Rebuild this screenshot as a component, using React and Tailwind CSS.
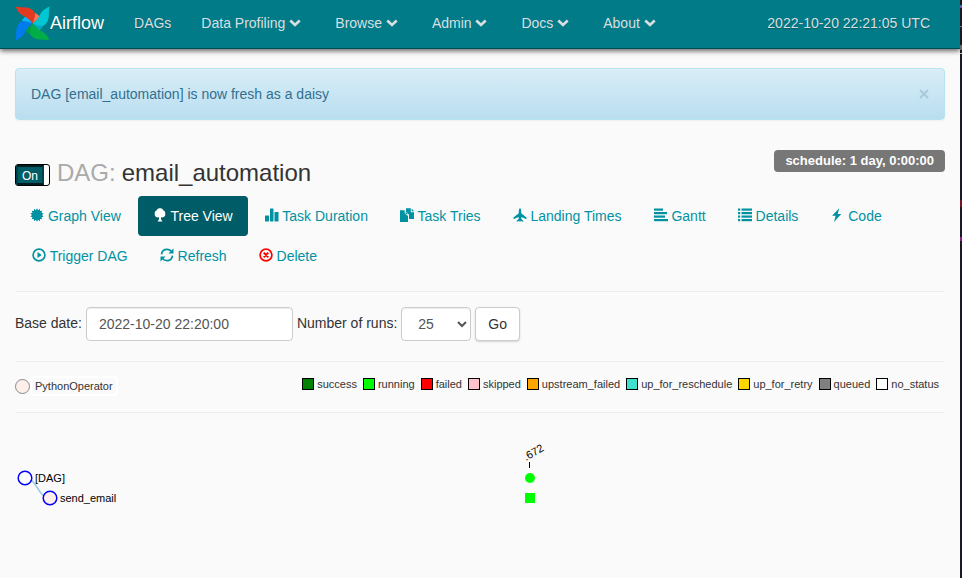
import React from "react";

const NAV_MENUS = ["Data Profiling", "Browse", "Admin", "Docs", "About"];

const STATES = [
  ["success", "bg-[#008000]"],
  ["running", "bg-[#00ff00]"],
  ["failed", "bg-[#ff0000]"],
  ["skipped", "bg-[#ffc0cb]"],
  ["upstream_failed", "bg-[#ffa500]"],
  ["up_for_reschedule", "bg-[#40e0d0]"],
  ["up_for_retry", "bg-[#ffd700]"],
  ["queued", "bg-[#808080]"],
  ["no_status", "bg-white"],
];

const burst = Array.from({ length: 28 }, (_, i) => {
  const r = i % 2 ? 5 : 6.8;
  const a = (i * Math.PI) / 14;
  return `${(7 + r * Math.sin(a)).toFixed(2)},${(7 - r * Math.cos(a)).toFixed(2)}`;
}).join(" ");

const GLYPHS = {
  graph: <polygon points={burst} />,
  tree: (
    <path d="M7 .3C8.500 0 9.800 1 10.200 2.200C11.700 2.800 12.600 4.200 12.200 5.800C12.800 8 11 9.700 9 9.400C8.600 9.400 8.300 9.200 8 9V11.300L9.500 13.600H4.500L6 11.300V9C5.700 9.200 5.400 9.400 5 9.400C3 9.700 1.200 8 1.800 5.800C1.400 4.200 2.300 2.800 3.800 2.200C4.200 1 5.500 0 7 .3Z" />
  ),
  stats: (
    <>
      <rect x="0" y="7.500" width="4" height="6" rx=".4" />
      <rect x="5" y="0.500" width="3.500" height="13" rx=".4" />
      <rect x="9.500" y="4" width="4" height="9.500" rx=".4" />
    </>
  ),
  copy: (
    <>
      <path d="M0 2.300H4.700V5.200L7 7.600H8V14H0Z" />
      <path d="M6 .3H10.800V4.300H14V11H9V6.700L6 3.600Z" />
      <path d="M11.700 .6L14 3.300H11.700ZM5.600 3.400L8 6.300H5.600Z" />
    </>
  ),
  plane: (
    <path d="M7 0C7.900 .8 8.200 2 8.200 3.200V5.200L13.500 9.500V11.200L8.400 8.900L8.300 11.100L10.300 12.700V13.800L7.700 13L7 14L6.300 13L3.700 13.800V12.700L5.700 11.100L5.600 8.900L.5 11.200V9.500L5.800 5.200V3.200C5.800 2 6.100 .8 7 0Z" />
  ),
  gantt: (
    <>
      <rect x="0" y="0.500" width="9" height="2.200" />
      <rect x="0" y="4" width="13" height="2.200" />
      <rect x="0" y="7.500" width="11" height="2.200" />
      <rect x="0" y="11" width="14" height="2.200" />
    </>
  ),
  list: (
    <>
      {[0.5, 4, 7.5, 11].map((y) => (
        <g key={y}>
          <rect x="0" y={y} width="2.200" height="2.200" />
          <rect x="3.500" y={y} width="10.500" height="2.200" />
        </g>
      ))}
    </>
  ),
  flash: <path d="M9.200 .2L2 7.800H5.600L4 13.900L11.300 6H7.700Z" />,
  play: (
    <>
      <circle cx="7" cy="7" r="5.900" fill="none" stroke="currentColor" strokeWidth="1.700" />
      <path d="M5.500 3.900L9.700 7L5.500 10.100Z" />
    </>
  ),
  refresh: (
    <>
      <path d="M1.500 6.400C1.900 3.300 4.200 1.400 7 1.400C8.700 1.400 10.200 2 11.300 3.200M12.500 7.600C12.100 10.700 9.800 12.600 7 12.600C5.300 12.600 3.800 12 2.700 10.800" fill="none" stroke="currentColor" strokeWidth="1.700" />
      <path d="M13.500 .5V5.600H8.400ZM.5 13.500V8.400H5.600Z" />
    </>
  ),
  remove: (
    <>
      <circle cx="7" cy="7" r="5.900" fill="none" stroke="currentColor" strokeWidth="1.700" />
      <path d="M4.700 4.700L9.300 9.300M9.300 4.700L4.700 9.300" fill="none" stroke="currentColor" strokeWidth="1.900" />
    </>
  ),
};

const TABS = [
  ["Graph View", "graph"],
  ["Tree View", "tree"],
  ["Task Duration", "stats"],
  ["Task Tries", "copy"],
  ["Landing Times", "plane"],
  ["Gantt", "gantt"],
  ["Details", "list"],
  ["Code", "flash"],
  ["Trigger DAG", "play"],
  ["Refresh", "refresh"],
  ["Delete", "remove"],
];

function Glyph({ name }) {
  return (
    <svg
      viewBox="0 0 14 14"
      aria-hidden="true"
      className={`inline-block size-3.5 fill-current align-[-1px] ${name === "remove" ? "text-[#ff0000]" : ""}`}
    >
      {GLYPHS[name]}
    </svg>
  );
}

function Pinwheel() {
  const blades = [
    [0, "#e43921", "#ff7557"],
    [90, "#00c7d4", "#04a9b8"],
    [180, "#00ad46", "#079a4c"],
    [270, "#017cee", "#0cb6ff"],
  ];
  return (
    <svg viewBox="0 0 35 35" aria-hidden="true" className="mt-0.5 size-[35px] shrink-0">
      {blades.map(([angle, , fold]) => (
        <path
          key={angle}
          transform={`rotate(${angle} 17.5 17.5)`}
          fill={fold}
          d="M17.500 17.500L20 7C22.500 8 24.500 10 24.800 11.500C22 13.500 20 15.500 17.500 17.500Z"
        />
      ))}
      {blades.map(([angle, main]) => (
        <path
          key={angle}
          transform={`rotate(${angle} 17.5 17.5)`}
          fill={main}
          d="M.4 .4C4 1.200 8 1 11.500 1.400C16 2 18.700 4.500 20 7C20.300 10.500 19 14 17.500 17.500C15.500 13.500 11.500 11.500 7 9C4 7 2 4 .4 .4Z"
        />
      ))}
    </svg>
  );
}

function Chevron() {
  return (
    <svg viewBox="0 0 12 8" aria-hidden="true" className="inline-block h-2 w-3 align-[1px]">
      <path d="M1.300 1.500L6 6L10.700 1.500" fill="none" stroke="currentColor" strokeWidth="2.700" />
    </svg>
  );
}

function Navbar() {
  return (
    <nav className="flex h-[49px] items-center border-b border-[#004b54] bg-[#017b87] pb-[3px] pl-[15px] text-[#d9dfe0] shadow-[0_2px_5px_rgba(0,0,0,0.6)] [text-shadow:0_1px_1px_rgba(0,0,0,0.25)]">
      <a href="#" className="flex items-center pr-[15px] text-lg leading-5 text-white">
        <Pinwheel />
        Airflow
      </a>
      <a href="#" className="px-[15px]">DAGs</a>
      {NAV_MENUS.map((label) => (
        <button key={label} type="button" className="pl-[15px] pr-[19px] whitespace-nowrap">
          {label} <Chevron />
        </button>
      ))}
      <span className="ml-auto pr-[30px]">2022-10-20 22:21:05 UTC</span>
    </nav>
  );
}

function TreeChart() {
  return (
    <svg
      role="img"
      aria-label="Task tree"
      className="h-[145px] w-full font-['Liberation_Sans',Arial,sans-serif] text-[11px]"
    >
      <path d="M10 45C22.500 45 22.500 65 35 65" fill="none" stroke="#9ecae1" strokeWidth="1.500" />
      <circle cx="10" cy="45" r="6.800" fill="#fff" stroke="#0000ff" strokeWidth="1.500" />
      <circle cx="35" cy="65" r="6.800" fill="#ffefeb" stroke="#0000ff" strokeWidth="1.500" />
      <text x="20" y="49">[DAG]</text>
      <text x="45" y="69">send_email</text>
      <text transform="translate(511 28) rotate(-30)">.672</text>
      <path d="M514.500 29V35" stroke="#000" />
      <circle cx="515" cy="45" r="5" fill="#00ff00" />
      <rect x="510" y="60" width="10" height="10" fill="#00ff00" />
    </svg>
  );
}

export default function App() {
  return (
    <div className="flex min-h-screen bg-[#fafafa] font-['Liberation_Sans',Arial,sans-serif] text-sm leading-5 text-[#333]">
      <div className="min-w-0 flex-1">
        <Navbar />
        <main className="px-[15px] pt-[19px]">
          <div
            role="alert"
            className="flex items-center justify-between rounded border border-[#b5e4ee] bg-linear-to-b from-[#d9edf7] to-[#b9def0] p-[15px] text-[#31708f] shadow-[0_1px_2px_rgba(0,0,0,0.05),inset_0_1px_0_rgba(255,255,255,0.25)]"
          >
            <span>DAG [email_automation] is now fresh as a daisy</span>
            <button type="button" aria-label="Close" className="text-[#a9cadb]">
              <svg viewBox="0 0 10 10" aria-hidden="true" className="size-2.5">
                <path d="M1 1L9 9M9 1L1 9" stroke="currentColor" strokeWidth="2" />
              </svg>
            </button>
          </div>

          <div className="mt-[30px] flex items-start justify-between">
            <h3 className="flex items-center pt-[10px] text-2xl leading-[26px]">
              <button
                type="button"
                aria-pressed="true"
                className="mt-1 mr-[7px] flex h-[22px] w-[35px] overflow-hidden rounded-[3px] border border-black bg-white text-xs leading-5 text-white"
              >
                <span className="flex h-5 w-[28px] items-center justify-center border-2 border-t-[#001c20] border-r-[#004049] border-b-[#001c20] border-l-[#004049] bg-[#005d68] pt-0.5">
                  On
                </span>
              </button>
              <span className="text-[#aaa]">DAG:</span>
              <span className="pl-1.5">email_automation</span>
            </h3>
            <span className="rounded bg-[#777] px-[11px] py-px text-[13px] leading-5 font-bold text-white">
              schedule: 1 day, 0:00:00
            </span>
          </div>

          <ul className="mt-[10px] flex flex-wrap">
            {TABS.map(([label, icon], i) => (
              <li key={label} className={i ? "ml-[2px]" : ""}>
                <a
                  href="#"
                  className={`block rounded px-[15px] py-[10px] ${
                    label === "Tree View" ? "bg-[#005c66] text-white" : "text-[#0092a2]"
                  }`}
                >
                  <Glyph name={icon} /> {label}
                </a>
              </li>
            ))}
          </ul>

          <hr className="mt-[15px] border-[#eee]" />

          <form className="flex flex-wrap items-center gap-1 pt-[15px] pb-5" onSubmit={(e) => e.preventDefault()}>
            <label htmlFor="base-date" className="pb-0.5">Base date:</label>
            <input
              id="base-date"
              type="text"
              defaultValue="2022-10-20 22:20:00"
              className="h-[34px] w-[207px] rounded border border-[#ccc] bg-white px-3 text-[#555] shadow-[inset_0_1px_1px_rgba(0,0,0,0.075)]"
            />
            <label htmlFor="runs" className="pb-0.5">Number of runs:</label>
            <select
              id="runs"
              defaultValue="25"
              className="h-[34px] w-[70px] rounded border border-[#ccc] bg-white px-3 text-[#555] shadow-[inset_0_1px_1px_rgba(0,0,0,0.075)]"
            >
              <option>5</option>
              <option>25</option>
              <option>50</option>
            </select>
            <button
              type="submit"
              className="h-[34px] rounded border border-[#ccc] bg-white px-3 shadow-[0_1px_2px_rgba(0,0,0,0.15)]"
            >
              Go
            </button>
          </form>

          <hr className="border-[#eee]" />

          <div className="flex h-[50px] items-start justify-between pt-[14px] text-[11px] leading-[19px]">
            <div className="flex items-center">
              <svg viewBox="0 0 15 15" aria-hidden="true" className="size-[15px]">
                <circle cx="7.500" cy="7.500" r="7" fill="#ffefeb" stroke="#888" />
              </svg>
              <span className="rounded border-2 border-white px-[3px] leading-4">PythonOperator</span>
            </div>
            <ul className="flex">
              {STATES.map(([name, color]) => (
                <li key={name} className="flex items-center pr-[6px] leading-4">
                  <span className={`mr-[3px] size-3 border border-black ${color}`} />
                  {name}
                </li>
              ))}
            </ul>
          </div>

          <hr className="mb-[20px] border-[#eee]" />
          <TreeChart />
        </main>
      </div>
      <div className="w-0.5 shrink-0 bg-[#191923]">
        <svg viewBox="0 0 2 250" aria-hidden="true" className="h-[250px] w-0.5">
          <rect y="5" width="2" height="2" fill="#3978a8" />
          <rect y="7" width="2" height="1" fill="#a32aa8" />
          <rect y="26" width="2" height="1" fill="#777" />
          <rect y="45" width="2" height="5" fill="#666" />
          <rect y="53" width="2" height="1" fill="#bbb" />
          <rect y="200" width="2" height="7" fill="#761525" />
          <rect y="237" width="2" height="4" fill="#951982" />
        </svg>
      </div>
    </div>
  );
}
